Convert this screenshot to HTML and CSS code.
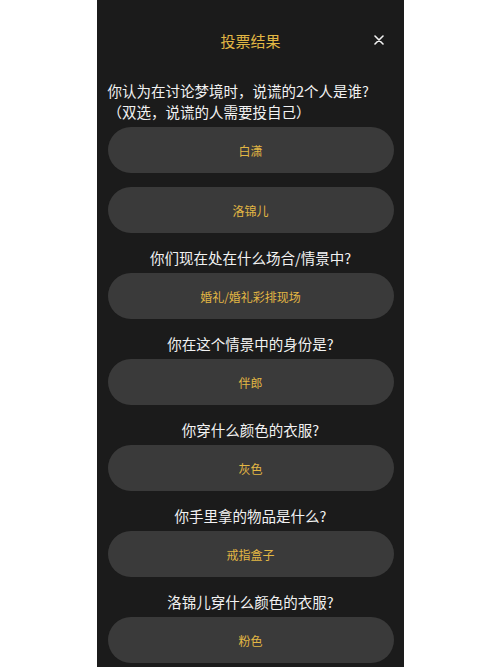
FILE: index.html
```html
<!DOCTYPE html>
<html>
<head>
    <meta charset="utf-8">
    <title>投票结果</title>
    <link rel="stylesheet" href="styles.css">
</head>
<body>
    <div class="sheet">
        <div class="header">
            <span></span>
            <h1 class="title">投票结果</h1>
            <span class="close">
                <svg width="10" height="10" viewBox="0 0 10 10">
                    <path d="M1 1 L9 9 M9 1 L1 9" stroke="#f2f2f2" stroke-width="1.6" stroke-linecap="round"/>
                </svg>
            </span>
        </div>

        <p class="question first">你认为在讨论梦境时，说谎的2个人是谁?<br>（双选，说谎的人需要投自己）</p>
        <div class="option">白潇</div>
        <div class="option">洛锦儿</div>

        <p class="question">你们现在处在什么场合/情景中?</p>
        <div class="option">婚礼/婚礼彩排现场</div>

        <p class="question">你在这个情景中的身份是?</p>
        <div class="option">伴郎</div>

        <p class="question">你穿什么颜色的衣服?</p>
        <div class="option">灰色</div>

        <p class="question">你手里拿的物品是什么?</p>
        <div class="option">戒指盒子</div>

        <p class="question">洛锦儿穿什么颜色的衣服?</p>
        <div class="option">粉色</div>
    </div>
</body>
</html>
```

FILE: styles.css
```css
body {
    margin: 0;
    background: #fff;
    font-family: "Noto Sans CJK SC", "Noto Sans", sans-serif;
}

.sheet {
    width: 307px;
    min-height: 667px;
    margin: 0 auto;
    padding: 0 10px 0 11px;
    box-sizing: border-box;
    background: #1b1b1b;
    overflow: hidden;
}

.header {
    height: 80px;
    display: grid;
    grid-template-columns: 1fr auto 1fr;
    align-items: center;
}

.title {
    margin: 0;
    font-size: 15px;
    font-weight: normal;
    color: #e2b744;
}

.close {
    justify-self: end;
    margin-right: 10px;
    display: flex;
}

.question {
    margin: 0 0 4px;
    font-size: 14.5px;
    line-height: 22px;
    color: #f2f2f2;
    text-align: center;
}

.question.first {
    text-align: left;
    line-height: 21px;
    margin-bottom: 5px;
}

.option {
    height: 46px;
    margin-bottom: 14px;
    border-radius: 23px;
    background: #3a3a3a;
    display: flex;
    align-items: center;
    justify-content: center;
    font-size: 12px;
    color: #e2b744;
}
```
